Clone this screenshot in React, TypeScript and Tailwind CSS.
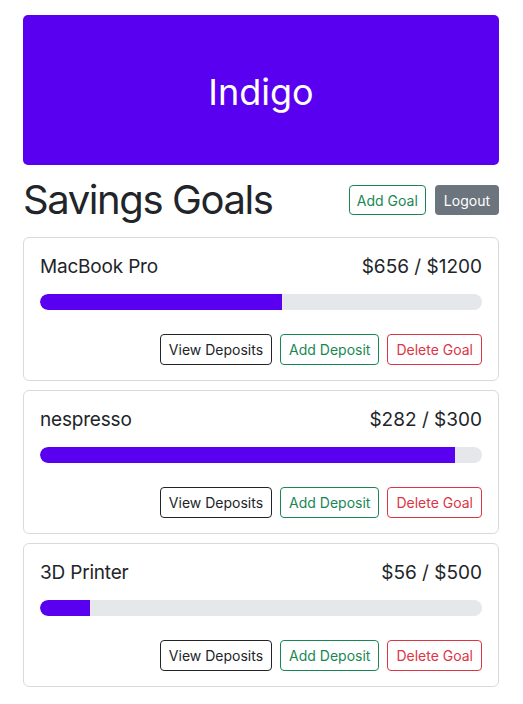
import React from 'react'

type Goal = { name: string; saved: number; target: number }

const goals: Goal[] = [
  { name: 'MacBook Pro', saved: 656, target: 1200 },
  { name: 'nespresso', saved: 282, target: 300 },
  { name: '3D Printer', saved: 56, target: 500 },
]

function GoalCard({ goal }: { goal: Goal }) {
  const pct = Math.min(100, (goal.saved / goal.target) * 100)
  return (
    <div className="h-[144px] border border-[#dadada] rounded-[6px] px-4 pt-[15px]">
      <div className="flex items-center justify-between h-[28px] text-[19px] text-[#212529]">
        <span className="tracking-[-0.01em]">{goal.name}</span>
        <span>${goal.saved} / ${goal.target}</span>
      </div>
      <div className="mt-[13px] h-4 rounded-full bg-[#e5e7eb] overflow-hidden">
        <div className="h-full bg-[#5a00f0] rounded-l-full" style={{ width: `${pct}%` }} />
      </div>
      <div className="flex justify-end gap-2 mt-[24px]">
        <button className="h-[31px] px-[8px] text-[14px] rounded-[4px] border border-[#212529] text-[#212529]">
          View Deposits
        </button>
        <button className="h-[31px] px-[8px] text-[14px] rounded-[4px] border border-[#198754] text-[#198754]">
          Add Deposit
        </button>
        <button className="h-[31px] px-[8px] text-[14px] rounded-[4px] border border-[#dc3545] text-[#dc3545]">
          Delete Goal
        </button>
      </div>
    </div>
  )
}

export default function App() {
  return (
    <div className="bg-white min-h-[704px] pl-[23px] pr-[24px] pt-[15px] pb-4 font-['Inter',sans-serif]">
      <div className="h-[150px] rounded-[5px] bg-[#5a00f0] flex items-center justify-center pt-[3px]">
        <span className="text-white text-[36px]">Indigo</span>
      </div>
      <div className="flex items-center justify-between mt-[12px] mb-[14px]">
        <h1 className="text-[40px] leading-[46px] text-[#212529] font-normal tracking-[-0.035em]">Savings Goals</h1>
        <div className="flex gap-[9px]">
          <button className="h-[30px] px-[7px] text-[14px] rounded-[4px] border border-[#198754] text-[#198754]">
            Add Goal
          </button>
          <button className="h-[30px] px-[9px] text-[14px] rounded-[4px] bg-[#6c757d] text-white">
            Logout
          </button>
        </div>
      </div>
      <div className="flex flex-col gap-[9px]">
        {goals.map(g => (
          <GoalCard key={g.name} goal={g} />
        ))}
      </div>
    </div>
  )
}
